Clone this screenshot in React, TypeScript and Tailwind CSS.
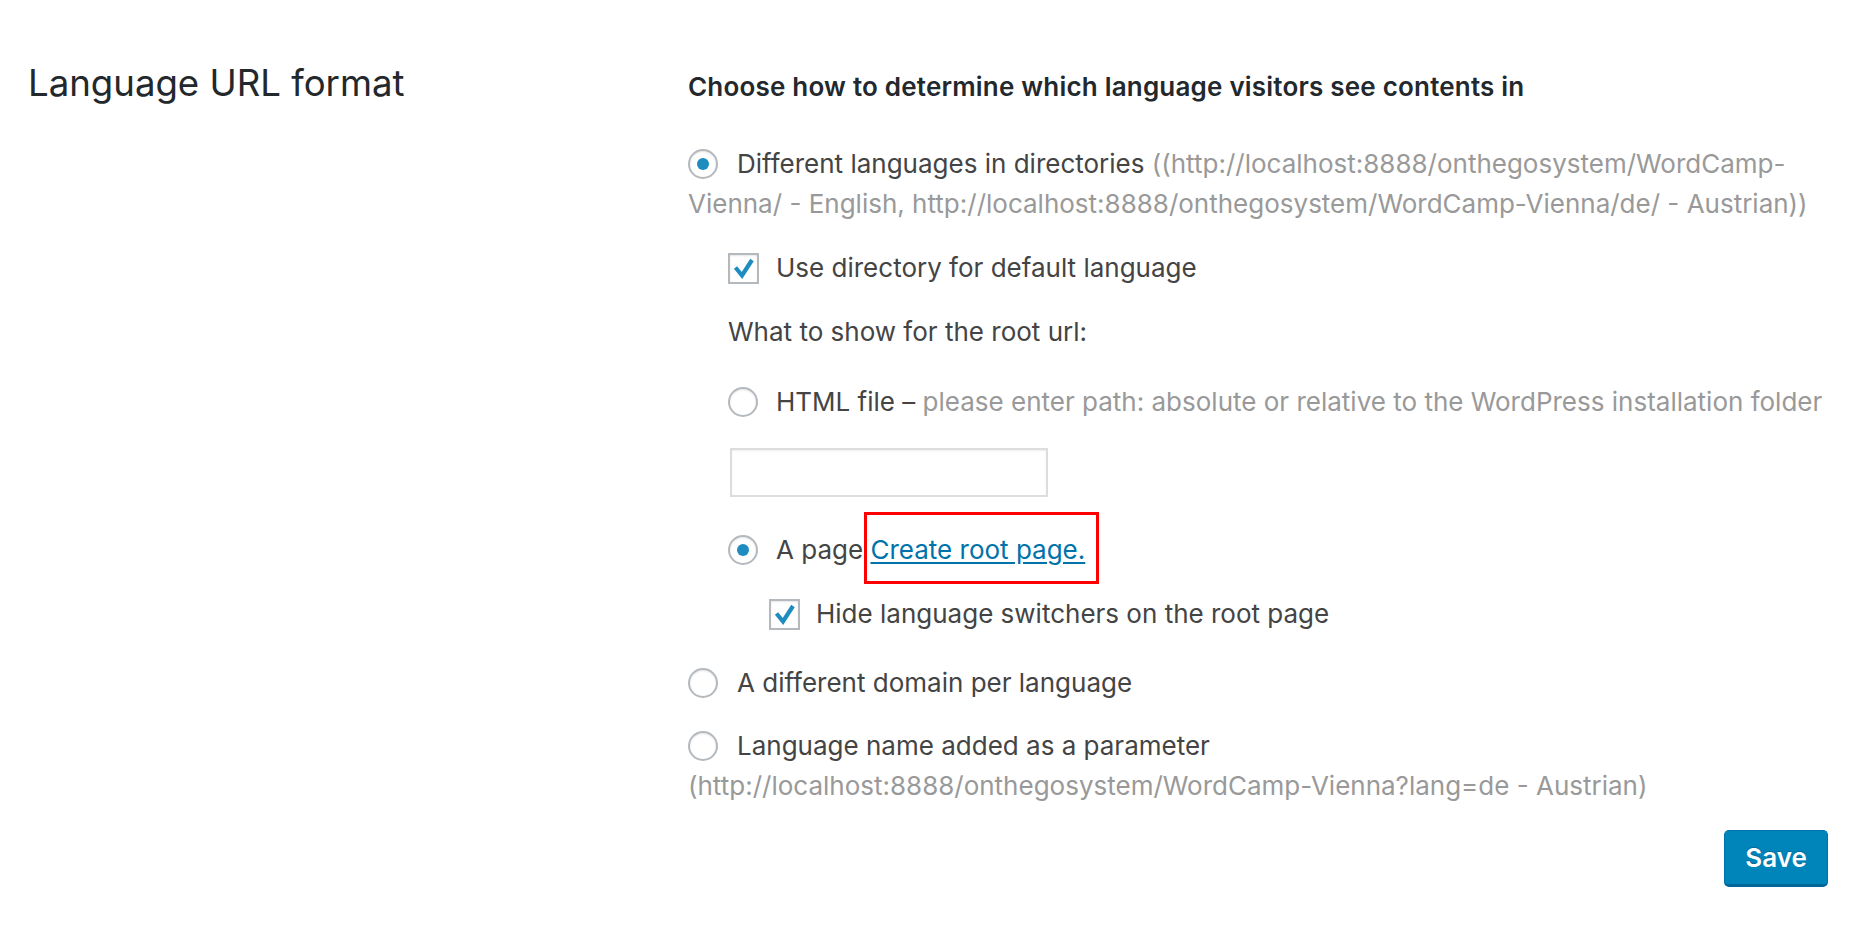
import React from 'react';

const Radio = ({ checked = false }: { checked?: boolean }) => (
  <span className="inline-flex w-[30px] h-[30px] shrink-0 items-center justify-center rounded-full border-2 border-[#b4b9be] bg-white shadow-[inset_0_1px_2px_rgba(0,0,0,0.1)]">
    {checked && <span className="w-[12px] h-[12px] rounded-full bg-[#1e8cbe]" />}
  </span>
);

const Checkbox = () => (
  <span className="inline-flex w-[31px] h-[31px] shrink-0 items-center justify-center border-2 border-[#b4b9be] bg-white shadow-[inset_0_1px_2px_rgba(0,0,0,0.1)]">
    <svg width="27" height="27" viewBox="0 0 27 27">
      <polyline points="5.5,12.5 12,20.5 22,5" fill="none" stroke="#1e8cbe" strokeWidth="4.2" />
    </svg>
  </span>
);

export default function App() {
  return (
    <div className="min-h-screen bg-white flex pl-[28px] font-['Inter',sans-serif] text-[#444]">
      {/* left title */}
      <div className="w-[660px] shrink-0 pt-[61px]">
        <h2 className="text-[36.6px] leading-[44px] text-[#23282d]">Language URL format</h2>
      </div>

      {/* options */}
      <div className="flex-1 pt-[67px] pr-[32px] text-[26px] leading-[40px]">
        <div className="font-semibold tracking-[0.2px] text-[#23282d]">
          Choose how to determine which language visitors see contents in
        </div>

        <div className="mt-[37px]">
          <div className="flex items-center gap-[19px] whitespace-nowrap">
            <Radio checked />
            <span>
              Different languages in directories{' '}
              <span className="text-[#999]">((http://localhost:8888/onthegosystem/WordCamp-</span>
            </span>
          </div>
          <div className="text-[#999] whitespace-nowrap">
            Vienna/ - English, http://localhost:8888/onthegosystem/WordCamp-Vienna/de/ - Austrian))
          </div>
        </div>

        <div className="mt-[24px] pl-[40px] flex items-center gap-[17px]">
          <Checkbox />
          <span>Use directory for default language</span>
        </div>

        <div className="mt-[24px] pl-[40px]">What to show for the root url:</div>

        <div className="mt-[30px] pl-[40px] flex items-center gap-[18px] whitespace-nowrap">
          <Radio />
          <span>
            HTML file –{' '}
            <span className="text-[#999]">
              please enter path: absolute or relative to the WordPress installation folder
            </span>
          </span>
        </div>

        <div className="mt-[26px] ml-[42px] w-[318px] h-[49px] border-2 border-[#ddd] bg-white shadow-[inset_0_1px_2px_rgba(0,0,0,0.07)]" />

        <div className="mt-[33px] pl-[40px] flex items-center gap-[18px]">
          <Radio checked />
          <span className="whitespace-nowrap">
            A page{' '}
            <span className="relative">
              <a href="#" className="text-[#0073aa] underline underline-offset-[3px]">
                Create root page.
              </a>
              <span className="absolute left-[-6px] top-[-22px] w-[235px] h-[72px] border-[3px] border-[#ff0000] pointer-events-none" />
            </span>
          </span>
        </div>

        <div className="mt-[24px] pl-[81px] flex items-center gap-[16px]">
          <Checkbox />
          <span>Hide language switchers on the root page</span>
        </div>

        <div className="mt-[29px] flex items-center gap-[19px]">
          <Radio />
          <span>A different domain per language</span>
        </div>

        <div className="mt-[23px]">
          <div className="flex items-center gap-[19px]">
            <Radio />
            <span>Language name added as a parameter</span>
          </div>
          <div className="text-[#999] whitespace-nowrap">
            (http://localhost:8888/onthegosystem/WordCamp-Vienna?lang=de - Austrian)
          </div>
        </div>

        <div className="mt-[24px] flex justify-end">
          <button className="w-[104px] h-[57px] rounded-[5px] bg-[#0085ba] border border-[#0073aa] border-b-[3px] border-b-[#006799] text-white text-[26px] font-semibold [text-shadow:0_-1px_1px_#006799]">
            Save
          </button>
        </div>
      </div>
    </div>
  );
}
